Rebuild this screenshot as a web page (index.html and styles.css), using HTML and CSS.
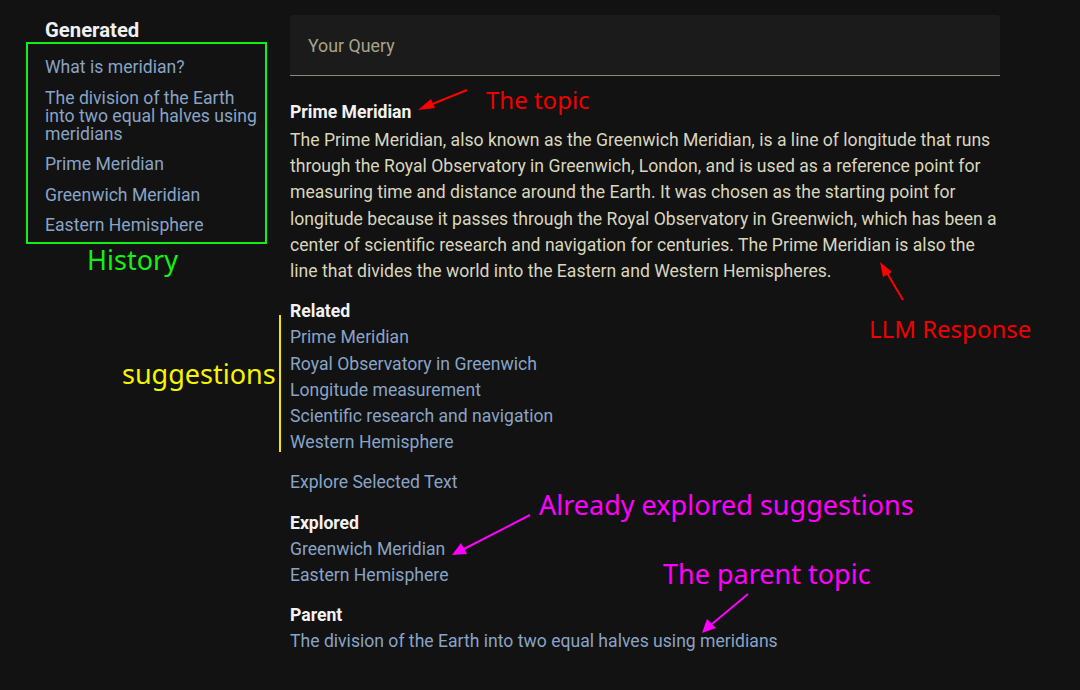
FILE: index.html
```html
<!DOCTYPE html>
<html>
<head>
<meta charset="utf-8">
<link rel="stylesheet" href="styles.css">
</head>
<body>
<div class="app">
  <aside class="sidebar">
    <h3 class="side-title">Generated</h3>
    <ul class="history">
      <li><a>What is meridian?</a></li>
      <li><a>The division of the Earth into two equal halves using meridians</a></li>
      <li><a>Prime Meridian</a></li>
      <li><a>Greenwich Meridian</a></li>
      <li><a>Eastern Hemisphere</a></li>
    </ul>
  </aside>
  <main class="main">
    <div class="query">Your Query</div>
    <section class="response">
      <h2 class="topic">Prime Meridian</h2>
      <p class="answer">The Prime Meridian, also known as the Greenwich Meridian, is a line of longitude that runs through the Royal Observatory in Greenwich, London, and is used as a reference point for measuring time and distance around the Earth. It was chosen as the starting point for longitude because it passes through the Royal Observatory in Greenwich, which has been a center of scientific research and navigation for centuries. The Prime Meridian is also the line that divides the world into the Eastern and Western Hemispheres.</p>
    </section>
    <section class="group">
      <h4 class="group-title">Related</h4>
      <a>Prime Meridian</a>
      <a>Royal Observatory in Greenwich</a>
      <a>Longitude measurement</a>
      <a>Scientific research and navigation</a>
      <a>Western Hemisphere</a>
    </section>
    <section class="group">
      <a>Explore Selected Text</a>
    </section>
    <section class="group">
      <h4 class="group-title">Explored</h4>
      <a>Greenwich Meridian</a>
      <a>Eastern Hemisphere</a>
    </section>
    <section class="group">
      <h4 class="group-title">Parent</h4>
      <a>The division of the Earth into two equal halves using meridians</a>
    </section>
  </main>
</div>

<div class="note-box history-box"></div>
<div class="note green history-label">History</div>
<div class="note red topic-label">The topic</div>
<div class="note red llm-label">LLM Response</div>
<div class="note yellow sugg-label">suggestions</div>
<div class="sugg-bar"></div>
<div class="note magenta explored-label">Already explored suggestions</div>
<div class="note magenta parent-label">The parent topic</div>

<svg class="arrows" width="1080" height="690" viewBox="0 0 1080 690">
  <g stroke="#ff0000" fill="#ff0000" stroke-width="2">
    <line x1="467" y1="90" x2="430" y2="105"/>
    <polygon stroke="none" points="418,110 431,99 435,108"/>
    <line x1="903" y1="300" x2="887" y2="273"/>
    <polygon stroke="none" points="880,262 883,277 892,272"/>
  </g>
  <g stroke="#ff00ff" fill="#ff00ff" stroke-width="2">
    <line x1="530" y1="515" x2="464" y2="549"/>
    <polygon stroke="none" points="452,555 461,543 467,554"/>
    <line x1="748" y1="594" x2="712" y2="624"/>
    <polygon stroke="none" points="702,633 707,619 716,628"/>
  </g>
</svg>
</body>
</html>
```
FILE: styles.css
```css
* { box-sizing: border-box; }
html, body {
  margin: 0;
  padding: 0;
  background: #121212;
  width: 1080px;
  height: 690px;
  overflow: hidden;
}
body {
  font-family: Roboto, "Liberation Sans", sans-serif;
  font-size: 17.6px;
  position: relative;
}
a { color: #88a4c6; text-decoration: none; cursor: pointer; }

.app {
  display: grid;
  grid-template-columns: 290px 710px;
  padding-top: 15px;
}

.sidebar {
  padding: 4px 28px 0 45px;
}
.side-title {
  margin: 0 0 17px;
  font-size: 20.3px;
  line-height: 22px;
  font-weight: 700;
  color: #f0f0f0;
}
.history {
  list-style: none;
  margin: 0;
  padding: 0;
  display: flex;
  flex-direction: column;
  gap: 12.5px;
  line-height: 18px;
}

.main {
  display: flex;
  flex-direction: column;
}
.query {
  height: 61px;
  background: #1b1b1b;
  border-bottom: 1px solid #8a8a7c;
  border-radius: 3px 3px 0 0;
  padding: 0 18px;
  display: flex;
  align-items: center;
  font-size: 17.8px;
  color: #a5a38d;
}
.response {
  margin-top: 23px;
}
.topic {
  margin: 0 0 2px;
  font-size: 17.6px;
  line-height: 26px;
  font-weight: 700;
  color: #f2f2f2;
}
.answer {
  margin: 0;
  line-height: 26.2px;
  color: #d9d6bd;
}
.group {
  margin-top: 14px;
  display: flex;
  flex-direction: column;
  line-height: 26.2px;
  align-items: flex-start;
}
.group-title {
  margin: 0;
  font-size: 17.6px;
  font-weight: 700;
  color: #f2f2f2;
}

/* annotation overlay */
.note {
  position: absolute;
  font-family: "Noto Sans", "Open Sans", sans-serif;
  font-size: 27px;
  line-height: 30px;
  white-space: nowrap;
}
.green { color: #14f014; }
.red { color: #f00000; font-size: 24px; }
.yellow { color: #f5f500; }
.magenta { color: #ff00ff; }

.history-box {
  position: absolute;
  left: 26px;
  top: 42px;
  width: 241px;
  height: 202px;
  border: 2px solid #14f014;
}
.history-label { left: 87px; top: 245px; }
.topic-label { left: 486px; top: 85px; }
.llm-label { left: 869px; top: 314px; }
.sugg-label { left: 122px; top: 359px; }
.sugg-bar {
  position: absolute;
  left: 279px;
  top: 315px;
  width: 2px;
  height: 137px;
  background: #f5e600;
}
.explored-label { left: 539px; top: 490px; }
.parent-label { left: 663px; top: 559px; }

.arrows {
  position: absolute;
  left: 0;
  top: 0;
  pointer-events: none;
}
```
